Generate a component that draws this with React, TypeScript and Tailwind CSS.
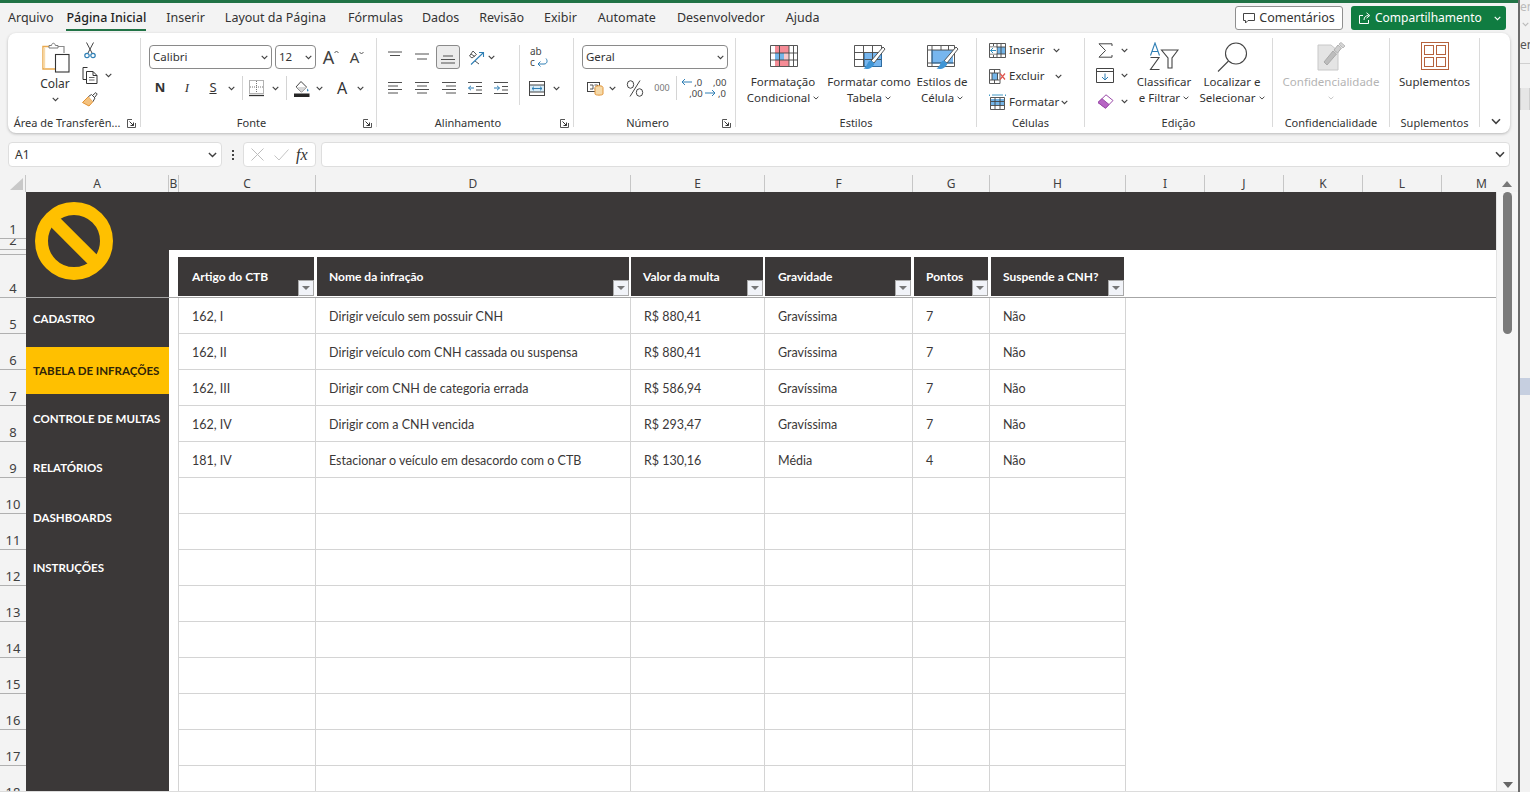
import React from "react";

const INK = "#404040";

function Chev({ w = 7, c = INK }: { w?: number; c?: string }) {
  return (
    <svg width={w} height={Math.ceil(w * 0.65)} viewBox="0 0 7 4.5" fill="none" stroke={c} strokeWidth="1.1">
      <path d="M.7.7 3.5 3.5 6.3.7" />
    </svg>
  );
}

function Launcher() {
  return (
    <svg width="9" height="9" viewBox="0 0 9 9" fill="none" stroke="#555" strokeWidth="1">
      <path d="M8.5 4V8.5H.5V.5H5" />
      <path d="M2.5 2.5 6.5 6.5M6.5 3.5V6.5H3.5" stroke="#333" />
    </svg>
  );
}

function Paste() {
  return (
    <svg width="29" height="32" viewBox="0 0 29 32" fill="none">
      <path d="M9 5.5H2V28H15" stroke="#e9a94e" strokeWidth="1.5" />
      <path d="M3.2 6.5V27" stroke="#f7d9a8" strokeWidth="2" />
      <path d="M16 5.5H23V12" stroke="#8b8b8b" strokeWidth="1.2" />
      <path d="M8 7V4.5H10.5C10.8 1.5 14 1.5 14.4 4.5H17V7Z" fill="#fff" stroke="#7a7a7a" strokeWidth="1" />
      <rect x="14.5" y="13.5" width="13.5" height="17.5" fill="#fff" stroke="#333" strokeWidth="1.1" />
    </svg>
  );
}

function Cut() {
  return (
    <svg width="12" height="17" viewBox="0 0 12 17" fill="none">
      <path d="M2.5 .5 8 11M9.5 .5 4 11" stroke="#444" strokeWidth="1" />
      <circle cx="3" cy="13.5" r="2.2" stroke="#2f7fb5" strokeWidth="1.2" />
      <circle cx="9" cy="13.5" r="2.2" stroke="#2f7fb5" strokeWidth="1.2" />
    </svg>
  );
}

function Copy() {
  return (
    <svg width="16" height="17" viewBox="0 0 16 17" fill="none" stroke="#333" strokeWidth="1">
      <path d="M5.5 .5H1V12.5H4.5" />
      <path d="M4.5 4.5H11L15 8.5V16.5H4.5ZM11 4.5V8.5H15" fill="#fff" />
      <path d="M7 10.5H12.5M7 13H12.5" stroke="#666" />
    </svg>
  );
}

function Painter() {
  return (
    <svg width="16" height="16" viewBox="0 0 16 16" fill="none">
      <path d="M6.5 4.5 11 9.5 7 14 .5 10.5Z" fill="#f4c27f" stroke="#e29233" strokeWidth="1" />
      <path d="M6.5 4.5 9.5 2.5 13 6 11 9.5" fill="#fff" stroke="#444" strokeWidth="1" />
      <path d="M11 3 13.8.6 15.2 2 13 5" stroke="#444" strokeWidth="1" />
    </svg>
  );
}

function GrowA({ small }: { small?: boolean }) {
  return (
    <span className="flex items-start text-[#404040]">
      <span className={small ? "text-[15px] leading-[18px]" : "text-[18px] leading-[20px]"}>A</span>
      <svg width="5" height="4" viewBox="0 0 5 4" fill="none" stroke="#555" className="mt-[3px]">
        {small ? <path d="M.5 1 2.5 3 4.5 1" /> : <path d="M.5 3 2.5 1 4.5 3" />}
      </svg>
    </span>
  );
}

function Borders() {
  return (
    <svg width="16" height="17" viewBox="0 0 16 17" fill="none">
      <rect x=".5" y=".5" width="14" height="13" stroke="#666" strokeDasharray="1 1" />
      <path d="M7.5 1V13M1 7H14" stroke="#777" strokeDasharray="1 1" />
      <path d="M0 15.5H15" stroke="#333" strokeWidth="1.3" />
    </svg>
  );
}

function FillColor() {
  return (
    <svg width="17" height="17" viewBox="0 0 17 17" fill="none">
      <path d="M8 1.5 13.5 7 8.5 12 3 7Z" stroke="#444" strokeWidth="1" />
      <path d="M3 7H13.5L8.5 12Z" fill="#d8d8d8" />
      <path d="M14.5 8.5C15.5 10 16 11 14.8 11.5 13.6 11 14 10 14.5 8.5Z" fill="#2f7fb5" />
      <rect x="1" y="13.5" width="15.5" height="3.5" fill="#262626" />
    </svg>
  );
}

function Lines({ rows }: { rows: [number, number, number][] }) {
  return (
    <svg width="16" height="14" viewBox="0 0 16 14" fill="none" stroke="#505050" strokeWidth="1">
      {rows.map(([x1, x2, y], i) => (
        <path key={i} d={`M${x1} ${y}H${x2}`} />
      ))}
    </svg>
  );
}

function Indent({ out }: { out?: boolean }) {
  return (
    <svg width="16" height="14" viewBox="0 0 16 14" fill="none" stroke="#505050" strokeWidth="1">
      <path d="M1 1.5H15M9 5.5H15M9 9H15M1 12.5H15" />
      <path d={out ? "M7 7H1.5M4 4.8 1.5 7 4 9.2" : "M1 7H6.5M4 4.8 6.5 7 4 9.2"} stroke="#2f7fb5" />
    </svg>
  );
}

function Orient() {
  return (
    <svg width="17" height="17" viewBox="0 0 17 17" fill="none">
      <path d="M1.5 7 5 2 8.5 5.5 4 9ZM3 5 6.8 7.5M7 12 11 15" stroke="#555" strokeWidth="1" />
      <path d="M3 15.5 15 4M11 3.5H15.5V8" stroke="#2f7fb5" strokeWidth="1.1" />
    </svg>
  );
}

function Wrap() {
  return (
    <span className="relative flex h-[22px] w-[18px] flex-col text-[10px] leading-[11px] text-[#444]">
      <span>ab</span>
      <span>c</span>
      <svg width="12" height="9" viewBox="0 0 12 9" fill="none" stroke="#2f7fb5" className="absolute bottom-[1px] right-0">
        <path d="M10 .5C12 3 11 6 8 6H2M4.5 3.5 2 6 4.5 8.5" />
      </svg>
    </span>
  );
}

function Merge() {
  return (
    <svg width="16" height="15" viewBox="0 0 16 15" fill="none">
      <rect x=".5" y=".5" width="15" height="14" stroke="#444" />
      <rect x="1" y="4" width="14" height="7" fill="#d7ecf8" />
      <path d="M1 4H15M1 11H15" stroke="#444" />
      <path d="M3 7.5H13M5 5.7 3 7.5 5 9.3M11 5.7 13 7.5 11 9.3" stroke="#2f7fb5" />
    </svg>
  );
}

function Accounting() {
  return (
    <svg width="17" height="16" viewBox="0 0 17 16" fill="none">
      <rect x=".5" y="2.5" width="12" height="9" stroke="#444" />
      <path d="M3 5H6V9H3M7.5 5H10.5V9H7.5" stroke="#444" strokeWidth=".9" />
      <ellipse cx="12" cy="7.5" rx="4" ry="1.8" fill="#f5d9a8" stroke="#e2963c" />
      <path d="M8 8V14C8 15.5 16 15.5 16 14V8" fill="#f5d9a8" stroke="#e2963c" />
    </svg>
  );
}

function Percent() {
  return (
    <svg width="18" height="17" viewBox="0 0 18 17" fill="none" stroke="#444" strokeWidth="1">
      <ellipse cx="4.5" cy="4.5" rx="3.2" ry="3.8" />
      <ellipse cx="13.5" cy="12.5" rx="3.2" ry="3.8" />
      <path d="M14 .5 4 16.5" />
    </svg>
  );
}

function Sigma() {
  return (
    <svg width="15" height="15" viewBox="0 0 15 15" fill="none" stroke="#444" strokeWidth="1">
      <path d="M14 3V.8H1L7.5 7.5 1 14.2H14V12" />
    </svg>
  );
}

function DecLess() {
  return (
    <span className="relative block h-[22px] w-[24px] text-[9.5px] leading-[11px] text-[#444]">
      <span className="block pl-[13px]">,0</span>
      <span className="block pl-[8px]">,00</span>
      <svg width="11" height="8" viewBox="0 0 11 8" fill="none" stroke="#2f7fb5" className="absolute left-0 top-[1px]">
        <path d="M11 4H1M4 1 1 4 4 7" />
      </svg>
    </span>
  );
}

function DecMore() {
  return (
    <span className="relative block h-[22px] w-[24px] text-[9.5px] leading-[11px] text-[#444]">
      <span className="block pl-[8px]">,00</span>
      <span className="block pl-[13px]">,0</span>
      <svg width="11" height="8" viewBox="0 0 11 8" fill="none" stroke="#2f7fb5" className="absolute bottom-[2px] left-0">
        <path d="M0 4H10M7 1 10 4 7 7" />
      </svg>
    </span>
  );
}

function CondFmt() {
  return (
    <svg width="28" height="22" viewBox="0 0 28 22" fill="none">
      <path d="M5 1H19V8H5ZM5 15H19V21H5" fill="#f58c96" />
      <rect x="10" y="8" width="9" height="7" fill="#f9c9cc" />
      <rect x="5" y="8" width="9" height="7" fill="#74b5e8" />
      <path d="M.5.5H27.5V21.5H.5ZM.5 8H27.5M.5 15H27.5M9.5 1V21M19 1V21M23.5 1V21" stroke="#444" strokeWidth=".9" />
    </svg>
  );
}

function Brush() {
  return (
    <>
      <path d="M17 16 29 2 31 4 20 18Z" fill="#fff" stroke="#444" strokeWidth=".9" />
      <path d="M17 15.5C13 16 14 21 9.5 23.5 14 25 19 23 20.5 18.5Z" fill="#3f95d5" />
    </>
  );
}

function TableFmt() {
  return (
    <svg width="32" height="25" viewBox="0 0 32 25" fill="none">
      <rect x="11" y="8" width="17" height="14" fill="#77b6ee" />
      <path d="M.5.5H27.5V21.5H.5ZM.5 7.5H27.5M.5 14.5H27.5M9.5 1V21M18.5 1V21" stroke="#444" strokeWidth=".9" />
      <path d="M10.5 8V21.5H27.5V8" stroke="#2d6fa8" strokeWidth=".9" />
      <Brush />
    </svg>
  );
}

function CellStyles() {
  return (
    <svg width="32" height="25" viewBox="0 0 32 25" fill="none">
      <rect x="5" y="5" width="21" height="13" fill="#77b6ee" />
      <path d="M.5.5H27.5V21.5H.5ZM1 5H27M1 18H27M5 1V21M21.5 1V5M14 1V5" stroke="#444" strokeWidth=".9" />
      <path d="M5 5V18H26" stroke="#2d6fa8" strokeWidth=".9" />
      <Brush />
    </svg>
  );
}

function InsertCells() {
  return (
    <svg width="17" height="15" viewBox="0 0 17 15" fill="none">
      <rect x="8" y="4" width="8" height="7" fill="#74b5e8" />
      <path d="M.5.5H16.5V14.5H.5ZM1 4H16M1 11H16M8 1V14M12 1V14M4.5 1V3M4.5 12V14" stroke="#444" strokeWidth=".9" />
      <rect x="1" y="4.5" width="6.5" height="6" fill="#fff" />
      <path d="M7 7.5H1.5M4 5 1.5 7.5 4 10" stroke="#2f8fc0" />
    </svg>
  );
}

function DeleteCells() {
  return (
    <svg width="17" height="15" viewBox="0 0 17 15" fill="none">
      <rect x="3" y="4" width="6" height="7" fill="#74b5e8" />
      <path d="M.5.5H11V14.5H.5ZM1 4H10.5M1 11H10.5M3 4V11M8.5 4V11M5.5 1V4M5.5 11V14" stroke="#444" strokeWidth=".9" />
      <path d="M11 4.5 16 10.5M16 4.5 11 10.5" stroke="#e0564f" strokeWidth="1.2" />
    </svg>
  );
}

function FormatCells() {
  return (
    <svg width="17" height="16" viewBox="0 0 17 16" fill="none">
      <rect x="2" y="5" width="13" height="6" fill="#74b5e8" />
      <path d="M1.5 3.5H15.5V15.5H1.5ZM2 7.5H15M2 11.5H15M6 4V15M11 4V15" stroke="#444" strokeWidth=".9" />
      <path d="M3 1H14M.5.5V2M16.5.5V2" stroke="#2f8fc0" strokeWidth=".9" />
    </svg>
  );
}

function FillDown() {
  return (
    <svg width="18" height="15" viewBox="0 0 18 15" fill="none">
      <path d="M.5.5H17.5V14.5H.5Z" stroke="#444" />
      <path d="M1 3.5H17" stroke="#444" />
      <path d="M9 5.5V12M6 9 9 12 12 9" stroke="#2f7fb5" />
    </svg>
  );
}

function Eraser() {
  return (
    <svg width="17" height="15" viewBox="0 0 17 15" fill="none">
      <path d="M1 8.5 9 .8 16 6.5 8.5 14.2Z" fill="#fff" stroke="#9a4aa8" />
      <path d="M1 8.5 5 4.7 12 10.5 8.5 14.2Z" fill="#b765c4" stroke="#9a4aa8" />
    </svg>
  );
}

function SortFilter() {
  return (
    <svg width="30" height="29" viewBox="0 0 30 29" fill="none">
      <path d="M1.5 13.5 6 1 10.5 13.5M3 9.5H9" stroke="#2f7fb5" strokeWidth="1.1" />
      <path d="M1.5 15.5H10L1.5 27.5H10.5" stroke="#444" strokeWidth="1.1" />
      <path d="M12.5 8H29L23 16V26H19V16Z" stroke="#444" strokeWidth="1.1" />
    </svg>
  );
}

function Search() {
  return (
    <svg width="31" height="30" viewBox="0 0 31 30" fill="none" stroke="#444" strokeWidth="1.1">
      <circle cx="19" cy="11.5" r="10.5" />
      <path d="M11.5 19 1 29.5" />
    </svg>
  );
}

function Sensitivity() {
  return (
    <svg width="29" height="29" viewBox="0 0 29 29" fill="none">
      <path d="M1 3H14L21 9V28H1Z" fill="#e4e4e4" stroke="#c8c8c8" />
      <path d="M7 20 16 9 19.5 12 10 23Z" fill="#bdbdbd" stroke="#aaa" />
      <path d="M17 8 21 3 24.5 6 20.5 11Z" fill="#cfcfcf" stroke="#b0b0b0" />
      <path d="M22 2 24 .5 28 4 26 6Z" fill="#d5d5d5" stroke="#bbb" />
    </svg>
  );
}

function AddIns() {
  return (
    <svg width="28" height="28" viewBox="0 0 28 28" fill="none" stroke="#b5613c" strokeWidth="1">
      <rect x=".5" y=".5" width="27" height="27" />
      <rect x="3.5" y="3.5" width="9" height="9" />
      <rect x="15.5" y="3.5" width="9" height="9" />
      <rect x="3.5" y="15.5" width="9" height="9" />
      <rect x="15.5" y="15.5" width="9" height="9" />
    </svg>
  );
}

function Label({ text, launcher }: { text: string; launcher?: boolean }) {
  return (
    <div className="-mb-[3px] flex h-[14px] shrink-0 items-center text-[11px] leading-[14px] text-[#333]">
      <span className="flex-1 whitespace-nowrap text-center">{text}</span>
      {launcher && (
        <span className="flex w-[14px] shrink-0 items-center justify-start pl-[1px]">
          <Launcher />
        </span>
      )}
    </div>
  );
}

function Box({ text }: { text: string }) {
  return (
    <div className="flex h-[24px] w-full items-center rounded-[4px] border border-[#8a8a8a] bg-white pl-[3px] pr-[3px] text-[11.5px] text-[#333]">
      <span className="flex-1">{text}</span>
      <Chev />
    </div>
  );
}

const slot = "flex shrink-0 items-center justify-center";
const tabs = [
  { t: "Arquivo", c: "" },
  { t: "Página Inicial", c: "ml-[13px]" },
  { t: "Inserir", c: "ml-[20px]" },
  { t: "Layout da Página", c: "ml-[20px]" },
  { t: "Fórmulas", c: "ml-[22px]" },
  { t: "Dados", c: "ml-[19px]" },
  { t: "Revisão", c: "ml-[20px]" },
  { t: "Exibir", c: "ml-[20px]" },
  { t: "Automate", c: "ml-[21px]" },
  { t: "Desenvolvedor", c: "ml-[21px]" },
  { t: "Ajuda", c: "ml-[21px]" },
];

function TopBar() {
  return (
    <div className="flex h-[30px] shrink-0 items-center text-[12px] text-[#333]">
      <div className="flex items-center pl-[8px] text-[12.5px]">
        {tabs.map((t) => (
          <span
            key={t.t}
            className={`${t.c} whitespace-nowrap ${t.t === "Página Inicial" ? "flex h-[26px] items-center border-y-2 border-t-transparent border-b-[#217346] font-medium text-[#1f1f1f]" : ""}`}
          >
            {t.t}
          </span>
        ))}
      </div>
      <div className="ml-auto flex items-center gap-[8px] pr-[12px]">
        <div className="flex h-[24px] w-[108px] items-center justify-center gap-[4px] rounded-[3px] border border-[#8f8f8f] bg-white text-[12.5px]">
          <svg width="12" height="12" viewBox="0 0 12 12" fill="none" stroke="#444">
            <path d="M.5 1.5H11.5V8.5H5L2.5 11V8.5H.5Z" />
          </svg>
          <span>Comentários</span>
        </div>
        <div className="flex h-[24px] w-[155px] items-center rounded-[3px] bg-[#107c41] pl-[8px] pr-[5px] text-white">
          <svg width="12" height="12" viewBox="0 0 12 12" fill="none" stroke="#fff">
            <path d="M4 3.5H.5V11.5H9.5V8M5 8C5 5 7 3.5 9.5 3.5M7.5 .8 10.8 3.5 7.5 6.2" />
          </svg>
          <span className="ml-[4px] flex-1 whitespace-nowrap">Compartilhamento</span>
          <Chev c="#fff" />
        </div>
      </div>
    </div>
  );
}

function Ribbon() {
  const row = "flex h-[24px] items-center";
  const lines2 = "whitespace-nowrap text-center text-[11.5px] leading-[16px] text-[#333]";
  return (
    <div className="mr-[8px] ml-[8px] flex h-[100px] shrink-0 rounded-[8px] bg-white pt-[5px] shadow-[0_1px_3px_rgba(0,0,0,0.25)]">
      {/* Área de Transferência */}
      <div className="flex h-[89px] w-[133px] shrink-0 flex-col border-r border-[#dadada]">
        <div className="flex flex-1 pl-[22px] pt-[3px]">
          <div className="flex w-[50px] flex-col items-center">
            <Paste />
            <span className="mt-[3px] text-[12px] leading-[16px] text-[#333]">Colar</span>
            <span className="mt-[5px]"><Chev /></span>
          </div>
          <div className="flex flex-col gap-[8px] pt-[1px]">
            <span className={`${slot} h-[17px] w-[20px]`}><Cut /></span>
            <span className="flex h-[17px] items-center">
              <span className={`${slot} w-[20px]`}><Copy /></span>
              <span className={`${slot} w-[16px]`}><Chev /></span>
            </span>
            <span className={`${slot} h-[16px] w-[20px]`}><Painter /></span>
          </div>
        </div>
        <Label text="Área de Transferên..." launcher />
      </div>

      {/* Fonte */}
      <div className="flex h-[89px] w-[236px] shrink-0 flex-col border-r border-[#dadada]">
        <div className="flex flex-1 flex-col gap-[7px] pt-[7px]">
          <div className={`${row} pl-[8px]`}>
            <div className="w-[123px]"><Box text="Calibri" /></div>
            <div className="ml-[3px] w-[41px]"><Box text="12" /></div>
            <span className={`${slot} w-[30px]`}><GrowA /></span>
            <span className={`${slot} w-[22px]`}><GrowA small /></span>
          </div>
          <div className={`${row} pl-[7px] text-[13px] text-[#333]`}>
            <span className={`${slot} w-[24px] font-bold`}>N</span>
            <span className={`${slot} w-[30px] font-['Liberation_Serif',serif] italic`}>I</span>
            <span className={`${slot} w-[22px] underline`}>S</span>
            <span className={`${slot} w-[14px]`}><Chev /></span>
            <span className={`${slot} w-[8px]`}><span className="h-[24px] w-px bg-[#d4d4d4]" /></span>
            <span className={`${slot} w-[22px]`}><Borders /></span>
            <span className={`${slot} w-[14px]`}><Chev /></span>
            <span className={`${slot} w-[8px]`}><span className="h-[24px] w-px bg-[#d4d4d4]" /></span>
            <span className={`${slot} w-[22px]`}><FillColor /></span>
            <span className={`${slot} w-[14px]`}><Chev /></span>
            <span className={`${slot} ml-[2px] w-[28px] text-[16px] leading-[20px]`}>A</span>
            <span className={`${slot} w-[8px]`}><Chev /></span>
          </div>
        </div>
        <Label text="Fonte" launcher />
      </div>

      {/* Alinhamento */}
      <div className="flex h-[89px] w-[197px] shrink-0 flex-col border-r border-[#dadada]">
        <div className="flex flex-1 pt-[7px]">
          <div className="flex h-[60px] w-[143px] shrink-0 flex-col gap-[7px] border-r border-[#dadada] pl-[5px]">
            <div className={row}>
              <span className={`${slot} w-[26px]`}><Lines rows={[[1, 15, 2], [3, 13, 5.5]]} /></span>
              <span className={`${slot} w-[28px]`}><Lines rows={[[1, 15, 4], [3, 13, 9]]} /></span>
              <span className={`${slot} h-[24px] w-[24px] rounded-[3px] border border-[#8a8a8a] bg-[#ececec]`}><Lines rows={[[3, 13, 6], [1, 15, 9.5], [1, 15, 13]]} /></span>
              <span className={`${slot} ml-[5px] w-[22px]`}><Orient /></span>
              <span className={`${slot} w-[8px]`}><Chev /></span>
            </div>
            <div className={row}>
              <span className={`${slot} w-[26px]`}><Lines rows={[[1, 15, 1.5], [1, 11, 5], [1, 15, 8.5], [1, 11, 12]]} /></span>
              <span className={`${slot} w-[27px]`}><Lines rows={[[1, 15, 1.5], [3, 13, 5], [1, 15, 8.5], [3, 13, 12]]} /></span>
              <span className={`${slot} w-[27px]`}><Lines rows={[[1, 15, 1.5], [5, 15, 5], [1, 15, 8.5], [5, 15, 12]]} /></span>
              <span className={`${slot} w-[26px]`}><Indent out /></span>
              <span className={`${slot} w-[26px]`}><Indent /></span>
            </div>
          </div>
          <div className="flex flex-col gap-[7px]">
            <div className={`${row} pl-[10px]`}><Wrap /></div>
            <div className={row}>
              <span className={`${slot} ml-[5px] w-[24px]`}><Merge /></span>
              <span className={`${slot} w-[14px]`}><Chev /></span>
            </div>
          </div>
        </div>
        <Label text="Alinhamento" launcher />
      </div>

      {/* Número */}
      <div className="flex h-[89px] w-[162px] shrink-0 flex-col border-r border-[#dadada]">
        <div className="flex flex-1 flex-col gap-[7px] pl-[8px] pt-[7px]">
          <div className="w-[146px]"><Box text="Geral" /></div>
          <div className={row}>
            <span className={`${slot} w-[26px]`}><Accounting /></span>
            <span className={`${slot} w-[8px]`}><Chev /></span>
            <span className={`${slot} w-[38px]`}><Percent /></span>
            <span className={`${slot} w-[16px] text-[9px] text-[#777]`}>000</span>
            <span className={`${slot} w-[12px]`}><span className="h-[24px] w-px bg-[#d4d4d4]" /></span>
            <span className={`${slot} w-[20px]`}><DecLess /></span>
            <span className={`${slot} ml-[3px] w-[24px]`}><DecMore /></span>
          </div>
        </div>
        <Label text="Número" launcher />
      </div>

      {/* Estilos */}
      <div className="flex h-[89px] w-[241px] shrink-0 flex-col border-r border-[#dadada]">
        <div className="flex flex-1 pl-[3px] pt-[7px]">
          <div className="flex w-[88px] flex-col items-center">
            <span className="h-[23px] pl-[2px]"><CondFmt /></span>
            <span className={`${lines2} mt-[6px]`}>Formatação</span>
            <span className={`${lines2} flex items-center gap-[3px]`}>Condicional <Chev w={6} /></span>
          </div>
          <div className="flex w-[84px] flex-col items-center">
            <span className="h-[23px] pl-[2px]"><TableFmt /></span>
            <span className={`${lines2} mt-[6px]`}>Formatar como</span>
            <span className={`${lines2} flex items-center gap-[3px]`}>Tabela <Chev w={6} /></span>
          </div>
          <div className="flex w-[62px] flex-col items-center">
            <span className="h-[23px] pl-[2px]"><CellStyles /></span>
            <span className={`${lines2} mt-[6px]`}>Estilos de</span>
            <span className={`${lines2} flex items-center gap-[3px]`}>Célula <Chev w={6} /></span>
          </div>
        </div>
        <Label text="Estilos" />
      </div>

      {/* Células */}
      <div className="flex h-[89px] w-[108px] shrink-0 flex-col border-r border-[#dadada]">
        <div className="flex flex-1 flex-col gap-[2px] pl-[11px] text-[11.5px] text-[#333]">
          <div className={row}>
            <span className={`${slot} w-[18px]`}><InsertCells /></span>
            <span className="ml-[3px] w-[44px]">Inserir</span>
            <Chev />
          </div>
          <div className={row}>
            <span className={`${slot} w-[18px]`}><DeleteCells /></span>
            <span className="ml-[3px] w-[46px]">Excluir</span>
            <Chev />
          </div>
          <div className={row}>
            <span className={`${slot} w-[18px]`}><FormatCells /></span>
            <span className="ml-[3px] w-[52px]">Formatar</span>
            <Chev />
          </div>
        </div>
        <Label text="Células" />
      </div>

      {/* Edição */}
      <div className="flex h-[89px] w-[188px] shrink-0 flex-col border-r border-[#dadada]">
        <div className="flex flex-1">
          <div className="flex w-[49px] shrink-0 flex-col gap-[1px] pl-[11px]">
            <div className={row}>
              <span className={`${slot} w-[18px]`}><Sigma /></span>
              <span className={`${slot} w-[20px]`}><Chev /></span>
            </div>
            <div className={row}>
              <span className={`${slot} w-[18px]`}><FillDown /></span>
              <span className={`${slot} w-[20px]`}><Chev /></span>
            </div>
            <div className={`${row} mt-[1px]`}>
              <span className={`${slot} w-[18px]`}><Eraser /></span>
              <span className={`${slot} w-[20px]`}><Chev /></span>
            </div>
          </div>
          <div className="flex w-[60px] flex-col items-center pt-[4px]">
            <span className="h-[29px]"><SortFilter /></span>
            <span className={`${lines2} mt-[3px]`}>Classificar</span>
            <span className={`${lines2} flex items-center gap-[3px]`}>e Filtrar <Chev w={6} /></span>
          </div>
          <div className="flex w-[76px] flex-col items-center pt-[4px]">
            <span className="h-[29px]"><Search /></span>
            <span className={`${lines2} mt-[3px]`}>Localizar e</span>
            <span className={`${lines2} flex items-center gap-[3px]`}>Selecionar <Chev w={6} /></span>
          </div>
        </div>
        <Label text="Edição" />
      </div>

      {/* Confidencialidade */}
      <div className="flex h-[89px] w-[117px] shrink-0 flex-col border-r border-[#dadada]">
        <div className="flex flex-1 flex-col items-center pt-[4px]">
          <span className="h-[29px]"><Sensitivity /></span>
          <span className={`${lines2} mt-[3px] !text-[#b4b4b4]`}>Confidencialidade</span>
          <span className="mt-[6px]"><Chev w={6} c="#c4c4c4" /></span>
        </div>
        <Label text="Confidencialidade" />
      </div>

      {/* Suplementos */}
      <div className="flex h-[89px] w-[90px] shrink-0 flex-col border-r border-[#dadada]">
        <div className="flex flex-1 flex-col items-center pt-[4px]">
          <span className="h-[29px]"><AddIns /></span>
          <span className={`${lines2} mt-[3px]`}>Suplementos</span>
        </div>
        <Label text="Suplementos" />
      </div>

      <div className="flex flex-1 items-end justify-center pb-[8px] pl-[2px]">
        <Chev w={10} />
      </div>
    </div>
  );
}

function FormulaBar() {
  return (
    <div className="mx-[8px] mt-[9px] flex h-[25px] shrink-0 items-stretch text-[12px] text-[#333]">
      <div className="flex w-[214px] items-center rounded-[4px] border border-[#dedede] bg-white pl-[6px] pr-[4px]">
        <span className="flex-1">A1</span>
        <Chev w={9} />
      </div>
      <div className="flex w-[21px] flex-col items-center justify-center gap-[2px]">
        <span className="h-[2px] w-[2px] bg-[#444]" />
        <span className="h-[2px] w-[2px] bg-[#444]" />
        <span className="h-[2px] w-[2px] bg-[#444]" />
      </div>
      <div className="flex w-[73px] items-center rounded-[4px] border border-[#dedede] bg-white">
        <span className={`${slot} ml-[4px] w-[18px]`}>
          <svg width="13" height="13" viewBox="0 0 13 13" fill="none" stroke="#bdbdbd"><path d="M.5.5 12.5 12.5M12.5.5.5 12.5" /></svg>
        </span>
        <span className={`${slot} ml-[6px] w-[18px]`}>
          <svg width="15" height="12" viewBox="0 0 15 12" fill="none" stroke="#c4c4c4"><path d="M.5 6.5 5 11 14.5.5" /></svg>
        </span>
        <span className="ml-[6px] font-['Liberation_Serif',serif] text-[16px] italic text-[#333]">fx</span>
      </div>
      <div className="ml-[5px] flex flex-1 items-center justify-end rounded-[4px] border border-[#dedede] bg-white pr-[4px]">
        <Chev w={10} />
      </div>
    </div>
  );
}

const headerCols = [
  { t: "A", c: "w-[143px]" },
  { t: "B", c: "w-[10px]" },
  { t: "C", c: "w-[137px]" },
  { t: "D", c: "w-[315px]" },
  { t: "E", c: "w-[134px]" },
  { t: "F", c: "w-[148px]" },
  { t: "G", c: "w-[77px]" },
  { t: "H", c: "w-[136px]" },
  { t: "I", c: "w-[79px]" },
  { t: "J", c: "w-[79px]" },
  { t: "K", c: "w-[79px]" },
  { t: "L", c: "w-[79px]" },
];

function ColHeaders() {
  return (
    <div className="mt-[8px] flex h-[17px] shrink-0 text-[12px] leading-[16px] text-[#404040]">
      <div className="flex w-[26px] shrink-0 items-end justify-end border-r border-[#c6c6c6] pb-[2px] pr-[2px]">
        <span className="h-0 w-0 border-b-[12px] border-l-[13px] border-b-[#c8c8c8] border-l-transparent" />
      </div>
      {headerCols.map((h) => (
        <div key={h.t} className={`${h.c} flex shrink-0 items-center justify-center border-r border-[#c6c6c6]`}>
          {h.t}
        </div>
      ))}
      <div className="flex w-[54px] shrink-0 items-center justify-end pr-[9px]">M</div>
      <div className="flex flex-1 items-center justify-center">
        <span className="h-0 w-0 border-x-[5px] border-b-[6px] border-x-transparent border-b-[#777]" />
      </div>
    </div>
  );
}

const rowHeaders: { n: number; c: string }[] = [
  { n: 1, c: "h-[47px]" },
  { n: 2, c: "h-[11px]" },
  { n: 3, c: "h-[5px]" },
  { n: 4, c: "h-[43px]" },
  ...[5, 6, 7, 8, 9, 10, 11, 12, 13, 14, 15, 16, 17, 18].map((n) => ({ n, c: "h-[36px]" })),
];

function RowHeaders() {
  return (
    <div className="w-[26px] shrink-0 text-[13px] leading-[15px] text-[#404040]">
      {rowHeaders.map((r) => (
        <div key={r.n} className={`${r.c} flex items-end justify-center overflow-hidden border-b border-[#b0b0b0] pb-[1px]`}>
          {r.n}
        </div>
      ))}
    </div>
  );
}

const navItems = [
  { t: "CADASTRO", c: "h-[49px] pb-[8px] text-white" },
  { t: "TABELA DE INFRAÇÕES", c: "h-[47px] bg-[#ffc000] text-[#2f2408]" },
  { t: "CONTROLE DE MULTAS", c: "h-[50px] text-white" },
  { t: "RELATÓRIOS", c: "h-[48px] text-white" },
  { t: "DASHBOARDS", c: "h-[51px] text-white" },
  { t: "INSTRUÇÕES", c: "h-[49px] text-white" },
];

function Sidebar() {
  return (
    <div className="w-[143px] shrink-0 bg-[#3b3838] font-['Lato',sans-serif] text-[11.5px] font-bold">
      <div className="flex h-[106px] items-start border-b border-[#a6a6a6] pl-[9px] pt-[10px]">
        <svg width="78" height="78" viewBox="0 0 78 78">
          <circle cx="39" cy="39" r="32.5" fill="none" stroke="#ffc000" strokeWidth="13" />
          <path d="M16 16 62 62" stroke="#ffc000" strokeWidth="13" />
        </svg>
      </div>
      {navItems.map((n) => (
        <div key={n.t} className={`${n.c} flex items-center whitespace-nowrap pl-[7px]`}>
          {n.t}
        </div>
      ))}
    </div>
  );
}

const tableCols = ["w-[138px]", "w-[315px]", "w-[134px]", "w-[148px]", "w-[77px]", "w-[136px]"];
const headers = ["Artigo do CTB", "Nome da infração", "Valor da multa", "Gravidade", "Pontos", "Suspende a CNH?"];
const headerBoxes = [
  "w-[136px] mr-[2px] pl-[14px]",
  "w-[312px] ml-px mr-[2px] pl-[12px]",
  "w-[132px] mr-[2px] pl-[12px]",
  "w-[146px] mr-[2px] pl-[13px]",
  "w-[74px] ml-px mr-[2px] pl-[12px]",
  "w-[133px] ml-px mr-[2px] pl-[12px]",
];
const data = [
  ["162, I", "Dirigir veículo sem possuir CNH", "R$ 880,41", "Gravíssima", "7", "Não"],
  ["162, II", "Dirigir veículo com CNH cassada ou suspensa", "R$ 880,41", "Gravíssima", "7", "Não"],
  ["162, III", "Dirigir com CNH de categoria errada", "R$ 586,94", "Gravíssima", "7", "Não"],
  ["162, IV", "Dirigir com a CNH vencida", "R$ 293,47", "Gravíssima", "7", "Não"],
  ["181, IV", "Estacionar o veículo em desacordo com o CTB", "R$ 130,16", "Média", "4", "Não"],
  ...Array.from({ length: 9 }, () => ["", "", "", "", "", ""]),
];

function Sheet() {
  return (
    <div className="flex min-w-0 flex-1 flex-col bg-white font-['Lato',sans-serif] text-[12.5px] text-[#3b3838]">
      <div className="h-[58px] shrink-0 bg-[#3b3838]" />
      <div className="flex h-[48px] shrink-0 border-b border-[#a6a6a6] pl-[9px] pt-[7px] text-[12px]">
        {headers.map((h, i) => (
          <div key={h} className={`${headerBoxes[i]} flex h-[39px] shrink-0 items-center justify-between bg-[#3b3838] font-bold text-white`}>
            <span className="whitespace-nowrap">{h}</span>
            <span className="mt-auto flex h-[16px] w-[16px] shrink-0 items-center justify-center self-end border border-[#a9a9a9] bg-[#f1f3f8]">
              <span className="h-0 w-0 border-x-[4px] border-t-[4px] border-x-transparent border-t-[#777]" />
            </span>
          </div>
        ))}
      </div>
      <div className="ml-[9px]">
        {data.map((r, ri) => (
          <div key={ri} className="flex h-[36px]">
            {r.map((v, ci) => (
              <div key={ci} className={`${tableCols[ci]} ${ci === 0 ? "border-l" : ""} flex shrink-0 items-center whitespace-nowrap border-r border-b border-[#d4d4d4] pl-[13px] pt-[3px]`}>
                {v}
              </div>
            ))}
          </div>
        ))}
      </div>
    </div>
  );
}

function Scrollbar() {
  return (
    <div className="flex w-[22px] shrink-0 flex-col items-center border-l border-[#e3e3e3] bg-[#f6f6f6]">
      <span className="h-[142px] w-[9px] rounded-full bg-[#7a7a7a]" />
      <span className="mt-[448px] h-0 w-0 border-x-[5px] border-t-[6px] border-x-transparent border-t-[#666]" />
    </div>
  );
}

function Strip() {
  return (
    <div className="flex w-[12px] shrink-0 flex-col overflow-hidden border-l-2 border-[#6b6b6b] bg-[#f2f2f2] font-['Noto_Sans',sans-serif] text-[12px] leading-[14px] text-[#555]">
      <span className="whitespace-nowrap text-[#bbb]">ene</span>
      <span className="mt-[8px] pl-[2px]"><Chev c="#bbb" /></span>
      <span className="mt-[11px] whitespace-nowrap">ene</span>
      <span className="mt-[11px] h-px bg-[#d0d0d0]" />
      <span className="mt-[24px] h-[22px] border-x border-[#cfcfcf] bg-[#e6e6e6]" />
      <span className="mt-[268px] h-[17px] bg-[#c6cfe0]" />
    </div>
  );
}

export default function App() {
  return (
    <div className="flex h-[792px] w-[1530px] overflow-hidden bg-[#f3f3f3] font-['Noto_Sans',sans-serif]">
      <div className="flex w-[1518px] shrink-0 flex-col border-t-[3px] border-[#217346]">
        <TopBar />
        <Ribbon />
        <FormulaBar />
        <ColHeaders />
        <div className="flex min-h-0 flex-1 overflow-hidden border-b border-[#dcdcdc]">
          <RowHeaders />
          <Sidebar />
          <Sheet />
          <Scrollbar />
        </div>
      </div>
      <Strip />
    </div>
  );
}
